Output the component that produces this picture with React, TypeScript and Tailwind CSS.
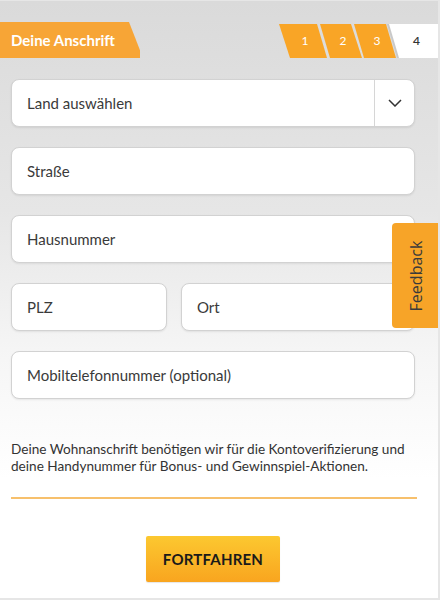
import React from "react";

const font = { fontFamily: "Lato, 'Open Sans', sans-serif" };

function Field({ label, className = "" }: { label: string; className?: string }) {
  return (
    <div
      className={`h-[48px] bg-white border border-[#d2d2d2] rounded-[8px] shadow-[0_1px_2px_rgba(0,0,0,0.08)] flex items-center pl-[15px] text-[15px] text-[#3a3a3a] ${className}`}
    >
      {label}
    </div>
  );
}

export default function App() {
  return (
    <div
      className="relative w-[440px] h-[600px] overflow-hidden border-t border-r-2 border-b-2 border-[#e6e6e6] bg-[linear-gradient(180deg,#dadada_0%,#e6e6e6_35%,#f6f6f6_60%,#ffffff_80%)]"
      style={font}
    >
      {/* header */}
      <div className="flex items-start pt-[21px] h-[57px]">
        <div className="w-[143px] h-[36px] bg-[#f7a536] [clip-path:polygon(0_0,129px_0,143px_100%,0_100%)] flex items-center pl-[11px] text-white font-bold text-[15px]">
          Deine Anschrift
        </div>
        <div className="flex ml-[139px] mt-[2px]">
          <div className="w-[48px] h-[34px] bg-[#f9a526] [clip-path:polygon(0_0,38px_0,48px_100%,11px_100%)] flex items-center justify-center pl-[4px] text-white text-[12px]">
            1
          </div>
          <div className="w-[42px] h-[34px] -ml-[7px] bg-[#f9a526] [clip-path:polygon(0_0,31px_0,42px_100%,10px_100%)] flex items-center justify-center pl-[4px] text-white text-[12px]">
            2
          </div>
          <div className="w-[42px] h-[34px] -ml-[8px] bg-[#f9a526] [clip-path:polygon(0_0,32px_0,42px_100%,10px_100%)] flex items-center justify-center pl-[4px] text-white text-[12px]">
            3
          </div>
          <div className="w-[51px] h-[34px] -ml-[9px] bg-[#c9c9c9] [clip-path:polygon(0_0,51px_0,51px_100%,10px_100%)] flex">
            <div className="ml-[2px] w-[49px] h-[34px] bg-white [clip-path:polygon(0_0,49px_0,49px_100%,10px_100%)] flex items-center justify-center pl-[6px] text-[#333] text-[12px] font-semibold">
              4
            </div>
          </div>
        </div>
      </div>

      {/* form */}
      <div className="pl-[11px] pr-[23px] pt-[21px] flex flex-col gap-[20px]">
        <div className="h-[48px] bg-white border border-[#d2d2d2] rounded-[8px] shadow-[0_1px_2px_rgba(0,0,0,0.08)] flex items-center text-[15px] text-[#3a3a3a]">
          <div className="flex-1 pl-[15px]">Land auswählen</div>
          <div className="w-[40px] h-full border-l border-[#d6d6d6] flex items-center justify-center">
            <svg width="14" height="8" viewBox="0 0 14 8" fill="none">
              <path d="M1 1l6 6 6-6" stroke="#333" strokeWidth="1.5" />
            </svg>
          </div>
        </div>
        <Field label="Straße" />
        <Field label="Hausnummer" />
        <div className="flex gap-[14px]">
          <Field label="PLZ" className="w-[156px]" />
          <Field label="Ort" className="flex-1" />
        </div>
        <Field label="Mobiltelefonnummer (optional)" />
      </div>

      <div className="pl-[11px] pr-[16px] mt-[42px] text-[13.6px] leading-[17px] text-[#333]">
        Deine Wohnanschrift benötigen wir für die Kontoverifizierung und deine Handynummer für Bonus- und Gewinnspiel-Aktionen.
      </div>

      <div className="ml-[11px] mr-[21px] mt-[22px] h-[2px] bg-[#f7c06c]" />

      <div className="flex justify-center pl-[11px] pr-[23px] mt-[37px]">
        <div className="w-[134px] h-[46px] rounded-[2px] bg-[linear-gradient(180deg,#fcc830,#f9a51f)] shadow-[0_1px_1px_rgba(0,0,0,0.1)] flex items-center justify-center text-[15px] font-bold text-[#1a1a1a] tracking-[0.2px]">
          FORTFAHREN
        </div>
      </div>

      {/* feedback tab */}
      <div className="absolute left-[392px] top-[222px] w-[48px] h-[105px] bg-[#f7a428] rounded-l-[4px] flex items-center justify-center">
        <span className="-rotate-90 text-[16px] text-[#3a3a3a] whitespace-nowrap" style={{ fontFamily: "'Open Sans', sans-serif" }}>
          Feedback
        </span>
      </div>
    </div>
  );
}
